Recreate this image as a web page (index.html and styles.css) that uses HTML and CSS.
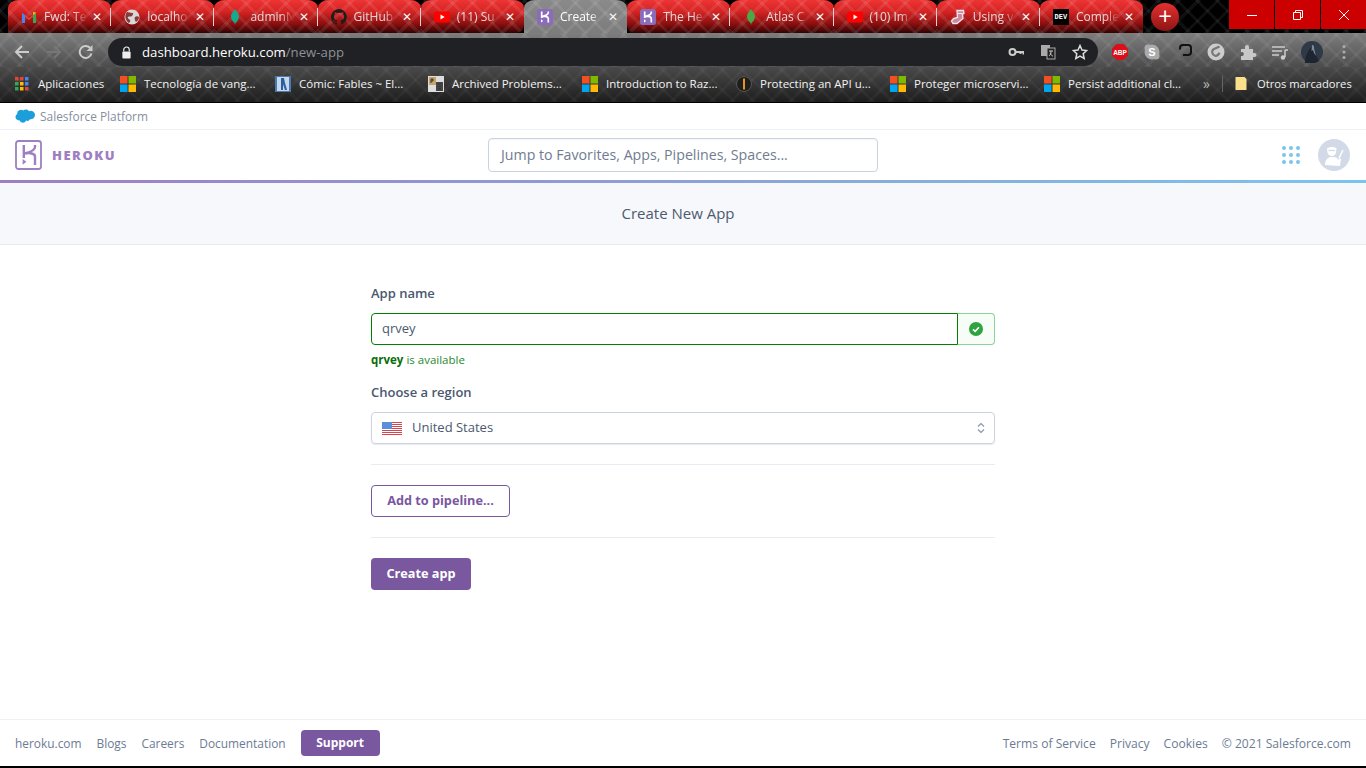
FILE: index.html
```html
<!DOCTYPE html>
<html lang="en">
<head>
  <meta charset="UTF-8" />
  <meta name="viewport" content="width=device-width, initial-scale=1.0"/>
  <title>Create New App | Heroku</title>
  <link rel="stylesheet" href="styles.css">
</head>
<body>
  <svg class="defs" width="0" height="0">
    <symbol id="ms" viewBox="0 0 16 16">
      <rect width="7.500" height="7.500" fill="#f25022"/><rect x="8.500" width="7.500" height="7.500" fill="#7fba00"/>
      <rect y="8.500" width="7.500" height="7.500" fill="#00a4ef"/><rect x="8.500" y="8.500" width="7.500" height="7.500" fill="#ffb900"/>
    </symbol>
    <symbol id="yt" viewBox="0 0 16 16">
      <rect y="2.500" width="16" height="11" rx="3" fill="#f00"/><path d="M6.500 5.500v5l4.200-2.500z" fill="#fff"/>
    </symbol>
    <symbol id="hk" viewBox="0 0 16 16">
      <rect width="16" height="16" rx="2.500" fill="#8a6cba"/>
      <path d="M4.700 2.500v6.500M11.300 2.500v1c0 2-2.500 3.200-6.600 4.200M5 7.700c3.500-.7 6.300 0 6.300 2V13.500" fill="none" stroke="#fff" stroke-width="1.700"/>
      <path d="M4 10.200l2.200 1.700L4 13.500z" fill="#fff"/>
    </symbol>
    <symbol id="leaf" viewBox="0 0 16 16">
      <path d="M8 0c1 2 4 4 4 7.500S9.500 13 8.500 14L8 16l-.5-2C6.500 13 4 11 4 7.500S7 2 8 0z"/>
    </symbol>
  </svg>

  <div class="tabstrip">
    <div class="tab">
      <svg class="fav" viewBox="0 0 16 16"><path d="M1 14V4l7 5 7-5v10h-3V7.500L8 11 4 7.500V14z" fill="#ea4335"/><path d="M1 14V4l3 2.200V14z" fill="#4285f4"/><path d="M15 14V4l-3 2.200V14z" fill="#34a853"/><path d="M12 6.200 15 4v-.500L12 3z" fill="#fbbc04"/></svg>
      <span class="tab-title">Fwd: Te</span><span class="tab-x">✕</span>
    </div>
    <div class="tab">
      <svg class="fav" viewBox="0 0 16 16"><circle cx="8" cy="8" r="7.500" fill="#d8d8d8"/><path d="M3 3c2 0 3 1 5 1s1 2 0 3-3 0-4 1 1 2 2 3-1 3-1 3-3-2-3.500-5S2 4 3 3zM11 8c1-1 3-1 4 0 0 2-1 4-3 5-1-1-2-4-1-5z" fill="#8a3a3a"/></svg>
      <span class="tab-title">localho</span><span class="tab-x">✕</span>
    </div>
    <div class="tab">
      <svg class="fav leaf-teal"><use href="#leaf"/></svg>
      <span class="tab-title">adminN</span><span class="tab-x">✕</span>
    </div>
    <div class="tab">
      <svg class="fav" viewBox="0 0 16 16"><path fill="#1d1d1d" d="M8 0a8 8 0 0 0-2.500 15.600c.4.100.5-.2.500-.4v-1.400c-2.200.5-2.700-1-2.700-1-.4-.9-.9-1.200-.9-1.200-.7-.5.100-.5.100-.5.800.1 1.200.8 1.200.8.700 1.200 1.900.9 2.300.7.100-.5.300-.9.500-1.100-1.800-.2-3.600-.9-3.600-4 0-.9.300-1.600.8-2.100-.1-.2-.4-1 .1-2.100 0 0 .7-.2 2.200.8a7.600 7.600 0 0 1 4 0c1.500-1 2.200-.8 2.200-.8.400 1.100.2 1.900.1 2.100.5.600.8 1.300.8 2.100 0 3.100-1.900 3.700-3.700 3.900.3.300.6.700.6 1.500v2.200c0 .2.100.5.600.4A8 8 0 0 0 8 0z"/></svg>
      <span class="tab-title">GitHub</span><span class="tab-x">✕</span>
    </div>
    <div class="tab tab-before-active">
      <svg class="fav"><use href="#yt"/></svg>
      <span class="tab-title">(11) Su</span><span class="tab-x">✕</span>
    </div>
    <div class="tab tab-active">
      <svg class="fav"><use href="#hk"/></svg>
      <span class="tab-title">Create</span><span class="tab-x">✕</span>
    </div>
    <div class="tab tab-after-active">
      <svg class="fav"><use href="#hk"/></svg>
      <span class="tab-title">The He</span><span class="tab-x">✕</span>
    </div>
    <div class="tab">
      <svg class="fav leaf-green"><use href="#leaf"/></svg>
      <span class="tab-title">Atlas C</span><span class="tab-x">✕</span>
    </div>
    <div class="tab">
      <svg class="fav"><use href="#yt"/></svg>
      <span class="tab-title">(10) Im</span><span class="tab-x">✕</span>
    </div>
    <div class="tab">
      <svg class="fav" viewBox="0 0 16 16"><path d="M7 1.500h6.500l.5 3-1.500 1 .5 4-6 5H3L1.500 12l2-2.500 4-1z" fill="#c98aa0" stroke="#f4e8ec" stroke-width="1.300"/><path d="M7.500 4.500h5" stroke="#f4e8ec"/></svg>
      <span class="tab-title">Using v</span><span class="tab-x">✕</span>
    </div>
    <div class="tab tab-last">
      <span class="fav dev-icon">DEV</span>
      <span class="tab-title">Comple</span><span class="tab-x">✕</span>
    </div>
    <div class="newtab">+</div>
    <div class="winbtns">
      <div class="winbtn"><svg width="10" height="10" viewBox="0 0 10 10"><path d="M0 5.500h10" stroke="#fff"/></svg></div>
      <div class="winbtn"><svg width="10" height="10" viewBox="0 0 10 10"><path d="M.5 2.500h7v7h-7zM2.500 2.500v-2h7v7h-2" fill="none" stroke="#fff"/></svg></div>
      <div class="winbtn"><svg width="10" height="10" viewBox="0 0 10 10"><path d="M0 0l10 10M10 0L0 10" stroke="#fff"/></svg></div>
    </div>
  </div>

  <div class="toolbar">
    <svg class="nav-icon" viewBox="0 0 16 16"><path d="M15 8H2M8 2 2 8l6 6" fill="none" stroke="#ccc" stroke-width="2"/></svg>
    <svg class="nav-icon" viewBox="0 0 16 16"><path d="M1 8h13M8 2l6 6-6 6" fill="none" stroke="#777" stroke-width="2"/></svg>
    <svg class="nav-icon" viewBox="0 0 16 16"><path d="M13.500 9.500A6 6 0 1 1 12 3.800" fill="none" stroke="#ccc" stroke-width="2"/><path d="M14.500 1v6h-6z" fill="#ccc"/></svg>
    <div class="omnibox">
      <svg class="lock" viewBox="0 0 12 14"><path d="M3 6V4a3 3 0 0 1 6 0v2" fill="none" stroke="#eee" stroke-width="1.300"/><rect x="1.500" y="6" width="9" height="7.500" rx="1" fill="#eee"/></svg>
      <span class="url">dashboard.heroku.com<span class="url-path">/new-app</span></span>
      <div class="omni-icons">
        <svg class="omni-icon" viewBox="0 0 16 16"><circle cx="4.500" cy="8" r="3" fill="none" stroke="#ccc" stroke-width="2"/><path d="M7 8h8.500v2.500M12.500 8v2" fill="none" stroke="#ccc" stroke-width="2"/></svg>
        <svg class="omni-icon" viewBox="0 0 16 16"><rect x="1" y="1" width="9" height="11" fill="#aaa"/><rect x="7" y="4" width="8" height="11" fill="#222" stroke="#aaa"/><path d="M9 7h4M11 7v1c0 2-1 3-2 4M10 9c1 2 2 3 3 3" fill="none" stroke="#ccc"/></svg>
        <svg class="omni-icon" viewBox="0 0 16 16"><path d="M8 1.500l2 4.500 4.700.500-3.500 3.200 1 4.800L8 12.100l-4.200 2.400 1-4.800-3.500-3.200L6 6z" fill="none" stroke="#ddd" stroke-width="1.500"/></svg>
      </div>
    </div>
    <div class="ext-icons">
      <svg class="ext-icon" viewBox="0 0 18 18"><path d="M5.500 1h7L17 5.500v7L12.500 17h-7L1 12.500v-7z" fill="#d8101a"/><text x="9" y="11.500" class="abp-text">ABP</text></svg>
      <svg class="ext-icon" viewBox="0 0 18 18"><circle cx="9" cy="9" r="7.500" fill="#aaa"/><circle cx="5" cy="5" r="3.500" fill="#aaa"/><circle cx="13" cy="13" r="3.500" fill="#aaa"/><text x="9" y="12.800" class="skype-text">S</text></svg>
      <svg class="ext-icon" viewBox="0 0 18 18"><path d="M6 16H3.500a1 1 0 0 1-1-1v-4" fill="none" stroke="#666" stroke-width="2"/><path d="M5 6.500V5a3 3 0 0 1 3-3h5a3 3 0 0 1 3 3v4a3 3 0 0 1-3 3H8" fill="none" stroke="#111" stroke-width="2"/></svg>
      <svg class="ext-icon" viewBox="0 0 18 18"><circle cx="9" cy="9" r="8.500" fill="#ccc"/><path d="M12.500 3.500 7 6C4 7.500 5 12 8 12.800c2 .5 3.500-1 4.500-3" fill="none" stroke="#777" stroke-width="2.200"/></svg>
      <svg class="ext-icon" viewBox="0 0 18 18"><path d="M2 6h4V4a2 2 0 0 1 4 0v2h4v4h1.500a2 2 0 0 1 0 4H14v3H2v-4h1.500a2.200 2.200 0 0 0 0-4H2z" fill="#c8c8c8"/></svg>
      <svg class="ext-icon" viewBox="0 0 18 18"><path d="M1 4h13M1 8h10M1 12h7" stroke="#ccc" stroke-width="1.500"/><path d="M14 7v7" stroke="#ccc" stroke-width="1.500"/><circle cx="12" cy="14.500" r="2.200" fill="#ccc"/><path d="M14 7h3" stroke="#ccc" stroke-width="1.500"/></svg>
      <svg class="avatar-small" viewBox="0 0 22 22"><circle cx="11" cy="11" r="11" fill="#303a46"/><path d="M4 22c0-6 3-14 8-17 2 4 2 8 6 15l-4 2z" fill="#1c2530"/><path d="M11 4c1.500 0 2.500 1.500 2 3l2 8-2-3-1-3-1.500 1z" fill="#7d8d9f"/></svg>
      <svg class="ext-icon" viewBox="0 0 18 18"><circle cx="9" cy="3.500" r="1.600" fill="#aaa"/><circle cx="9" cy="9" r="1.600" fill="#aaa"/><circle cx="9" cy="14.500" r="1.600" fill="#aaa"/></svg>
    </div>
  </div>

  <div class="bookmarks">
    <div class="bm bm-apps">
      <svg class="bm-icon" viewBox="0 0 14 14"><rect width="3.500" height="3.500" fill="#ea4335"/><rect x="5" width="3.500" height="3.500" fill="#ea4335"/><rect x="10" width="3.500" height="3.500" fill="#4285f4"/><rect y="5" width="3.500" height="3.500" fill="#34a853"/><rect x="5" y="5" width="3.500" height="3.500" fill="#fbbc04"/><rect x="10" y="5" width="3.500" height="3.500" fill="#4285f4"/><rect y="10" width="3.500" height="3.500" fill="#34a853"/><rect x="5" y="10" width="3.500" height="3.500" fill="#fbbc04"/><rect x="10" y="10" width="3.500" height="3.500" fill="#ea4335"/></svg>
      Aplicaciones
    </div>
    <div class="bm"><svg class="bm-icon"><use href="#ms"/></svg>Tecnología de vang...</div>
    <div class="bm">
      <svg class="bm-icon" viewBox="0 0 16 16"><rect width="16" height="16" fill="#4a78b0"/><rect x="2" y="1" width="12" height="14" fill="#c6d8ea"/><path d="M6 2h3l1 5 2 7h-2L8 8v6H6z" fill="#2c5f9e"/></svg>
      Cómic: Fables ~ El...
    </div>
    <div class="bm">
      <svg class="bm-icon" viewBox="0 0 16 16"><rect width="16" height="16" fill="#ddd"/><rect x="1" y="1" width="7" height="8" fill="#c9a26a"/><rect x="8" y="6" width="7" height="9" fill="#444"/><path d="M3 7V3h2v2H3M10 8h3M10 10.500h3M10 13h3" fill="none" stroke="#333"/></svg>
      Archived Problems...
    </div>
    <div class="bm"><svg class="bm-icon"><use href="#ms"/></svg>Introduction to Raz...</div>
    <div class="bm">
      <svg class="bm-icon" viewBox="0 0 16 16"><circle cx="8" cy="8" r="7.500" fill="#1e1e1e" stroke="#555"/><rect x="7" y="2.500" width="2" height="11" fill="#e8941a"/></svg>
      Protecting an API u...
    </div>
    <div class="bm"><svg class="bm-icon"><use href="#ms"/></svg>Proteger microservi...</div>
    <div class="bm"><svg class="bm-icon"><use href="#ms"/></svg>Persist additional cl...</div>
    <span class="bm-more">»</span>
    <span class="bm-sep"></span>
    <div class="bm bm-folder">
      <svg class="bm-icon" viewBox="0 0 12 14"><path d="M.5.500h9l2 2v11H.5z" fill="#fbe08c"/></svg>
      Otros marcadores
    </div>
  </div>

  <div class="sf-bar">
    <svg class="sf-cloud" viewBox="0 0 20 14"><path d="M8.300 1.600A3.500 3.500 0 0 1 11 .5c1.300 0 2.400.7 3 1.700a4.200 4.200 0 0 1 6 3.900 4.200 4.200 0 0 1-5 4.100 3 3 0 0 1-3.900 1.300A3.500 3.500 0 0 1 4.500 11.300 3.300 3.300 0 0 1 .5 8 3.300 3.300 0 0 1 2.200 5 3.800 3.800 0 0 1 8.300 1.600z" fill="#1b9fdb"/></svg>
    <span>Salesforce Platform</span>
  </div>

  <header class="app-header">
    <div class="brand">
      <svg class="brand-logo" viewBox="0 0 27 30"><rect x="1" y="1" width="25" height="28" rx="2.500" fill="none" stroke="#9e7fc2" stroke-width="1.800"/><path d="M8.800 5v13M20 5v2c0 3-4 5-10.500 6.500M9.500 13.500C15 12.500 20 13.500 20 16.500V25" fill="none" stroke="#9e7fc2" stroke-width="2.400"/><path d="M7.600 19l3.800 2.700-3.800 3z" fill="#9e7fc2"/></svg>
      <span class="brand-name">HEROKU</span>
    </div>
    <div class="search">Jump to Favorites, Apps, Pipelines, Spaces...</div>
    <div class="header-right">
      <svg class="apps" viewBox="0 0 18 18"><g fill="#7cc4ec"><circle cx="2" cy="2" r="2"/><circle cx="9" cy="2" r="2"/><circle cx="16" cy="2" r="2"/><circle cx="2" cy="9" r="2"/><circle cx="9" cy="9" r="2"/><circle cx="16" cy="9" r="2"/><circle cx="2" cy="16" r="2"/><circle cx="9" cy="16" r="2"/><circle cx="16" cy="16" r="2"/></g></svg>
      <svg class="user" viewBox="0 0 32 32"><circle cx="16" cy="16" r="16" fill="#d2dae8"/><path d="M9 9.500c2-2 8-2 9.500 0l-.5 4c-.5 2.500-2 3.500-4 3.500s-4-1-4.500-3.500z" fill="#fff"/><path d="M10.500 11.500h6.500" stroke="#d2dae8" stroke-width="1.200"/><path d="M7 26c0-5 3-8 6-8h3c2 0 3.500 1 4.500 3l1-2 1.500 1-1 7z" fill="#fff"/><path d="M21 19l4-8" stroke="#fff" stroke-width="1.600"/></svg>
    </div>
  </header>
  <div class="rainbow"></div>

  <div class="subheader">Create New App</div>

  <main class="content">
    <form class="new-app">
      <label class="field-label">App name</label>
      <div class="input-group">
        <div class="input-name">qrvey</div>
        <div class="input-addon">
          <svg class="check" viewBox="0 0 14 14"><circle cx="7" cy="7" r="7" fill="#2fa33f"/><path d="M4 7.300l2.200 2L10 5.200" fill="none" stroke="#fff" stroke-width="1.600"/></svg>
        </div>
      </div>
      <p class="available"><b>qrvey</b> is available</p>

      <label class="field-label region-label">Choose a region</label>
      <div class="select">
        <svg class="flag" viewBox="0 0 20 13"><rect width="20" height="13" fill="#fff"/><path d="M0 .5h20M0 2.500h20M0 4.500h20M0 6.500h20M0 8.500h20M0 10.500h20M0 12.500h20" stroke="#d0474f"/><rect width="10" height="7" fill="#5b8fdc"/></svg>
        <span class="select-value">United States</span>
        <svg class="chevrons" viewBox="0 0 8 12"><path d="M1 4.500 4 1.500l3 3M1 7.500l3 3 3-3" fill="none" stroke="#8a96ad" stroke-width="1.200"/></svg>
      </div>

      <hr class="rule rule-top">
      <button type="button" class="btn-outline">Add to pipeline...</button>
      <hr class="rule">
      <button type="button" class="btn-primary">Create app</button>
    </form>
  </main>

  <footer class="footer">
    <div class="footer-links">
      <a>heroku.com</a><a>Blogs</a><a>Careers</a><a>Documentation</a>
      <button type="button" class="btn-support">Support</button>
    </div>
    <div class="footer-links footer-legal">
      <a>Terms of Service</a><a>Privacy</a><a>Cookies</a><a>© 2021 Salesforce.com</a>
    </div>
  </footer>
</body>
</html>
```

FILE: styles.css
```css
* {
  box-sizing: border-box;
}
html, body {
  height: 100%;
}
body {
  margin: 0;
  display: flex;
  flex-direction: column;
  height: 768px;
  overflow: hidden;
  font-family: 'Open Sans', 'Noto Sans', sans-serif;
  color: #3f4f68;
  background: white;
}
.defs {
  position: absolute;
}

/* browser chrome */
.tabstrip {
  display: flex;
  height: 33px;
  flex: none;
  padding-left: 8px;
  background-color: #000;
  background-image:
    repeating-linear-gradient(45deg, rgba(255,255,255,.06) 0 3px, transparent 3px 14px),
    repeating-linear-gradient(-45deg, rgba(255,255,255,.06) 0 3px, transparent 3px 14px);
}
.tab {
  position: relative;
  width: 103.200px;
  display: flex;
  align-items: center;
  padding: 0 7px 0 13px;
  color: #e8d8d8;
  font-size: 12px;
  border-radius: 11px 11px 0 0 / 8px 8px 0 0;
  background-color: #a01818;
  background-image:
    repeating-linear-gradient(45deg, rgba(255,255,255,.08) 0 3px, transparent 3px 14px),
    repeating-linear-gradient(-45deg, rgba(255,255,255,.08) 0 3px, transparent 3px 14px),
    linear-gradient(#ee3434 0%, #d42424 35%, #8c0f0f 72%, #320303 100%);
}
.tab::after {
  content: '';
  position: absolute;
  right: 0;
  top: 8px;
  height: 18px;
  width: 1px;
  background: #e8d0d0;
}
.tab-before-active::after, .tab-active::after, .tab-last::after {
  display: none;
}
.tab-before-active {
  border-bottom-right-radius: 8px;
}
.tab-after-active {
  border-bottom-left-radius: 8px;
}
.tab-active {
  color: white;
  background-color: #888;
  background-image:
    repeating-linear-gradient(45deg, rgba(255,255,255,.08) 0 3px, transparent 3px 14px),
    repeating-linear-gradient(-45deg, rgba(255,255,255,.08) 0 3px, transparent 3px 14px),
    linear-gradient(#8a8a8a, #7c7c7c);
}
.fav {
  flex: none;
  width: 16px;
  height: 16px;
  margin-right: 7px;
}
.leaf-teal {
  fill: #13aa8d;
}
.leaf-green {
  fill: #4ba845;
}
.dev-icon {
  background: #000;
  color: white;
  font: bold 7px 'Liberation Mono', monospace;
  line-height: 16px;
  text-align: center;
}
.tab-title {
  flex: 1;
  min-width: 0;
  overflow: hidden;
  white-space: nowrap;
  -webkit-mask-image: linear-gradient(to right, black 70%, transparent 100%);
  mask-image: linear-gradient(to right, black 70%, transparent 100%);
}
.tab-x {
  flex: none;
  width: 14px;
  margin-left: 3px;
  font-size: 12px;
  text-align: center;
  color: #f6f6f6;
}
.newtab {
  flex: none;
  width: 28px;
  height: 28px;
  margin: 3px 0 0 8px;
  border-radius: 50%;
  background: linear-gradient(#e53030, #8f1414);
  color: white;
  font-size: 24px;
  line-height: 26px;
  text-align: center;
}
.winbtns {
  display: flex;
  gap: 1px;
  margin-left: auto;
  height: 29px;
}
.winbtn {
  width: 45px;
  background: #cc0000;
  display: flex;
  align-items: center;
  justify-content: center;
}
.toolbar {
  height: 34px;
  flex: none;
  display: flex;
  align-items: center;
  padding: 5px 0 1px 14px;
  background-image:
    repeating-linear-gradient(45deg, rgba(255,255,255,.05) 0 3px, transparent 3px 14px),
    repeating-linear-gradient(-45deg, rgba(255,255,255,.05) 0 3px, transparent 3px 14px),
    linear-gradient(#7e7e7e, #4c4c4c);
}
.nav-icon {
  flex: none;
  width: 16px;
  height: 16px;
  margin-right: 16px;
}
.omnibox {
  width: 990px;
  height: 28px;
  margin-left: -2px;
  flex: none;
  display: flex;
  align-items: center;
  padding: 0 10px 0 13px;
  background: #202124;
  border-radius: 14px;
  color: white;
  font-size: 13.200px;
}
.lock {
  width: 11px;
  height: 13px;
  margin-right: 10px;
}
.url-path {
  color: #8d9096;
}
.omni-icons {
  display: flex;
  gap: 16px;
  margin-left: auto;
}
.omni-icon {
  width: 16px;
  height: 16px;
}
.ext-icons {
  display: flex;
  align-items: center;
  gap: 14px;
  margin-left: 13px;
}
.ext-icon {
  width: 18px;
  height: 18px;
}
.avatar-small {
  width: 22px;
  height: 22px;
  margin: 0 -2px;
}
.abp-text {
  font: bold 6.500px 'Liberation Sans', sans-serif;
  fill: white;
  text-anchor: middle;
}
.skype-text {
  font: bold 11px 'Liberation Sans', sans-serif;
  fill: white;
  text-anchor: middle;
}
.bookmarks {
  height: 36px;
  flex: none;
  display: grid;
  grid-template-columns: 105px 155px 153px 154px 154px 154px 154px 159px 19px 13px auto;
  align-items: center;
  padding: 0 0 2px 15px;
  color: #f2f2f2;
  font-size: 11.500px;
  border-bottom: 1px solid #000;
  background-image:
    repeating-linear-gradient(45deg, rgba(255,255,255,.03) 0 3px, transparent 3px 14px),
    repeating-linear-gradient(-45deg, rgba(255,255,255,.03) 0 3px, transparent 3px 14px),
    linear-gradient(#4a4a4a, #1d1d1d);
}
.bm {
  display: flex;
  align-items: center;
  gap: 8px;
  white-space: nowrap;
}
.bm-icon {
  flex: none;
  width: 16px;
  height: 16px;
}
.bm-apps {
  gap: 9px;
}
.bm-apps .bm-icon {
  width: 14px;
  height: 14px;
}
.bm-folder {
  gap: 10px;
  font-size: 11.200px;
}
.bm-folder .bm-icon {
  width: 12px;
  height: 15px;
}
.bm-more {
  color: #bbb;
  font-size: 14px;
  line-height: 14px;
}
.bm-sep {
  width: 1px;
  height: 16px;
  background: #666;
}

/* heroku page */
.sf-bar {
  height: 27px;
  flex: none;
  display: flex;
  align-items: center;
  gap: 5px;
  padding-left: 15px;
  font-size: 11.900px;
  color: #858fa0;
  border-bottom: 1px solid #eef1f6;
}
.sf-cloud {
  width: 20px;
  height: 14px;
}
.app-header {
  height: 50px;
  flex: none;
  display: flex;
  align-items: center;
  justify-content: space-between;
  padding: 0 16px 0 15px;
}
.brand {
  width: 200px;
  display: flex;
  align-items: center;
  gap: 10px;
}
.brand-logo {
  width: 27px;
  height: 30px;
}
.brand-name {
  color: #9e7fc2;
  font-weight: 800;
  font-size: 13px;
  letter-spacing: 1.500px;
}
.search {
  width: 390px;
  height: 34px;
  padding-left: 12.500px;
  line-height: 32px;
  font-size: 14.200px;
  color: #6f7c91;
  border: 1px solid #ccd3e0;
  border-radius: 4px;
  box-shadow: inset 0 1px 1px #f2f4f8;
}
.header-right {
  width: 200px;
  display: flex;
  align-items: center;
  justify-content: flex-end;
  gap: 18px;
}
.apps {
  width: 18px;
  height: 18px;
}
.user {
  width: 32px;
  height: 32px;
}
.rainbow {
  height: 3px;
  flex: none;
  background: linear-gradient(to right, #9e7fc2, #7cc4ec);
}
.subheader {
  height: 62px;
  flex: none;
  text-align: center;
  padding-right: 10px;
  line-height: 61px;
  font-size: 15px;
  color: #4c5a70;
  background: #f7f8fb;
  border-bottom: 1px solid #e8ebf1;
}
.content {
  flex: 1;
  padding: 39px 0 0 371px;
}
.new-app {
  width: 624px;
}
.field-label {
  display: block;
  font-size: 13px;
  font-weight: 600;
  line-height: 18px;
  color: #4a5870;
}
.input-group {
  display: flex;
  height: 32px;
  margin-top: 11px;
}
.input-name {
  flex: 1;
  padding-left: 10px;
  line-height: 29px;
  font-size: 13px;
  color: #4a5870;
  border: 1px solid #008000;
  border-radius: 4px 0 0 4px;
}
.input-addon {
  width: 37px;
  display: flex;
  align-items: center;
  justify-content: center;
  background: #f6fcf6;
  border: 1px solid #8dd29b;
  border-left: none;
  border-radius: 0 4px 4px 0;
}
.check {
  width: 14px;
  height: 14px;
}
.available {
  margin: 7px 0 0;
  font-size: 11.500px;
  line-height: 16px;
  color: #1f8a30;
}
.available b {
  color: #0a6d0a;
}
.region-label {
  margin-top: 15px;
}
.select {
  display: flex;
  align-items: center;
  height: 32px;
  margin-top: 11px;
  padding: 0 9px 0 10px;
  border: 1px solid #ccd3e0;
  border-radius: 4px;
  box-shadow: 0 1px 1px #e8ebf1;
}
.flag {
  width: 20px;
  height: 13px;
}
.select-value {
  margin: 0 0 2px 10px;
  font-size: 13px;
  color: #4a5870;
}
.chevrons {
  width: 8px;
  height: 12px;
  margin-left: auto;
}
.rule {
  margin: 20px 0;
  border: none;
  border-top: 1px solid #e8ebf1;
}
.btn-outline, .btn-primary, .btn-support {
  font-family: inherit;
  font-size: 12.700px;
  font-weight: 700;
  border-radius: 4px;
  padding: 0 0 2px;
}
.btn-outline {
  display: block;
  width: 139px;
  height: 32px;
  color: #79589f;
  background: white;
  border: 1px solid #79589f;
}
.btn-primary {
  display: block;
  width: 100px;
  height: 32px;
  color: white;
  background: #79589f;
  border: none;
}
.footer {
  height: 49px;
  flex: none;
  display: flex;
  align-items: center;
  justify-content: space-between;
  padding: 0 15px;
  border-top: 1px solid #eef1f6;
  border-bottom: 2px solid #000;
}
.footer-links {
  display: flex;
  align-items: center;
  gap: 15px;
  font-size: 11.900px;
  color: #6c7b94;
}
.footer-legal {
  gap: 14px;
  font-size: 12.100px;
}
.btn-support {
  width: 79px;
  height: 26px;
  font-size: 12px;
  color: white;
  background: #79589f;
  border: none;
}
```
